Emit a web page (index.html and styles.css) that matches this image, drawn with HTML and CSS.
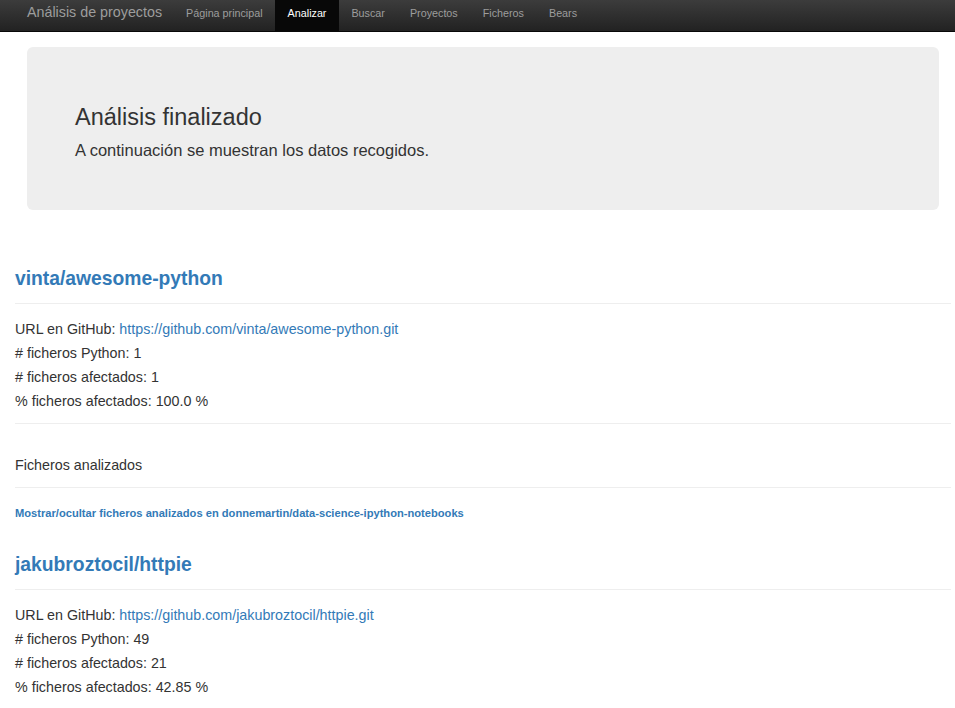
FILE: index.html
```
<!DOCTYPE html>
<html lang="es">
<head>
<meta charset="utf-8">
<title>Análisis de proyectos</title>
<link rel="stylesheet" href="styles.css">
</head>
<body>
<nav class="navbar">
  <a class="brand" href="#">Análisis de proyectos</a>
  <ul class="nav">
    <li><a href="#">Página principal</a></li>
    <li class="active"><a href="#">Analizar</a></li>
    <li><a href="#">Buscar</a></li>
    <li><a href="#">Proyectos</a></li>
    <li><a href="#">Ficheros</a></li>
    <li><a href="#">Bears</a></li>
  </ul>
</nav>
<div class="jumbotron">
  <h1 class="jt-title">Análisis finalizado</h1>
  <p class="jt-text">A continuación se muestran los datos recogidos.</p>
</div>
<main class="content">
  <section class="project">
    <h2 class="p-title"><a href="#">vinta/awesome-python</a></h2>
    <hr class="rule rule-title">
    <div class="info">
      <div>URL en GitHub: <a href="#">https://github.com/vinta/awesome-python.git</a></div>
      <div># ficheros Python: 1</div>
      <div># ficheros afectados: 1</div>
      <div>% ficheros afectados: 100.0 %</div>
    </div>
    <hr class="rule rule-info">
    <div class="files-head">Ficheros analizados</div>
    <hr class="rule rule-files">
    <a class="toggle" href="#">Mostrar/ocultar ficheros analizados en donnemartin/data-science-ipython-notebooks</a>
  </section>
  <section class="project project-next">
    <h2 class="p-title"><a href="#">jakubroztocil/httpie</a></h2>
    <hr class="rule rule-title">
    <div class="info">
      <div>URL en GitHub: <a href="#">https://github.com/jakubroztocil/httpie.git</a></div>
      <div># ficheros Python: 49</div>
      <div># ficheros afectados: 21</div>
      <div>% ficheros afectados: 42.85 %</div>
    </div>
  </section>
</main>
</body>
</html>
```

FILE: styles.css
```
* { box-sizing: border-box; }
html, body { margin: 0; padding: 0; }
body {
  font-family: "Liberation Sans", Arial, Helvetica, sans-serif;
  font-size: 14.3px;
  color: #333;
  background: #fff;
}
a { color: #337ab7; text-decoration: none; }

.navbar {
  display: flex;
  align-items: stretch;
  height: 32px;
  background: linear-gradient(to bottom, #3c3c3c 0, #222 100%);
  border-bottom: 1px solid #080808;
  padding-left: 27px;
}
.brand {
  color: #9d9d9d;
  font-size: 14.3px;
  line-height: 24px;
  padding-right: 12px;
  display: flex;
  align-items: center;
  padding-bottom: 7px;
}
.nav {
  display: flex;
  list-style: none;
  margin: 0;
  padding: 0;
}
.nav li a {
  display: flex;
  align-items: center;
  height: 31px;
  padding: 0 12.5px 6px 12.5px;
  color: #9d9d9d;
  font-size: 10.75px;
}
.nav li:first-child a { padding-left: 12px; }
.nav li.active a {
  background: #080808;
  color: #fff;
}

.jumbotron {
  margin: 15px 0 0 27px;
  width: 912px;
  height: 163px;
  background: #eee;
  border-radius: 6px;
  padding: 56px 48px 0 48px;
}
.jt-title {
  margin: 0;
  font-size: 23.5px;
  font-weight: 400;
  line-height: 28px;
}
.jt-text {
  margin: 7px 0 0;
  font-size: 16.5px;
  line-height: 24px;
}

.content {
  padding: 0 4px 0 15px;
}
.project { padding-top: 59px; }
.project-next { padding-top: 34px; }
.p-title {
  margin: 0;
  font-size: 19.3px;
  font-weight: 700;
  line-height: 20px;
}
.rule {
  border: 0;
  border-top: 1px solid #eee;
  margin: 0;
}
.rule-title { margin-top: 14px; }
.info { margin-top: 13px; line-height: 24px; }
.rule-info { margin-top: 10px; }
.files-head {
  margin-top: 31px;
  font-size: 14.3px;
  line-height: 20px;
}
.rule-files { margin-top: 12px; }
.toggle {
  display: block;
  margin-top: 17px;
  font-size: 11.15px;
  font-weight: 700;
  line-height: 16px;
}
```
